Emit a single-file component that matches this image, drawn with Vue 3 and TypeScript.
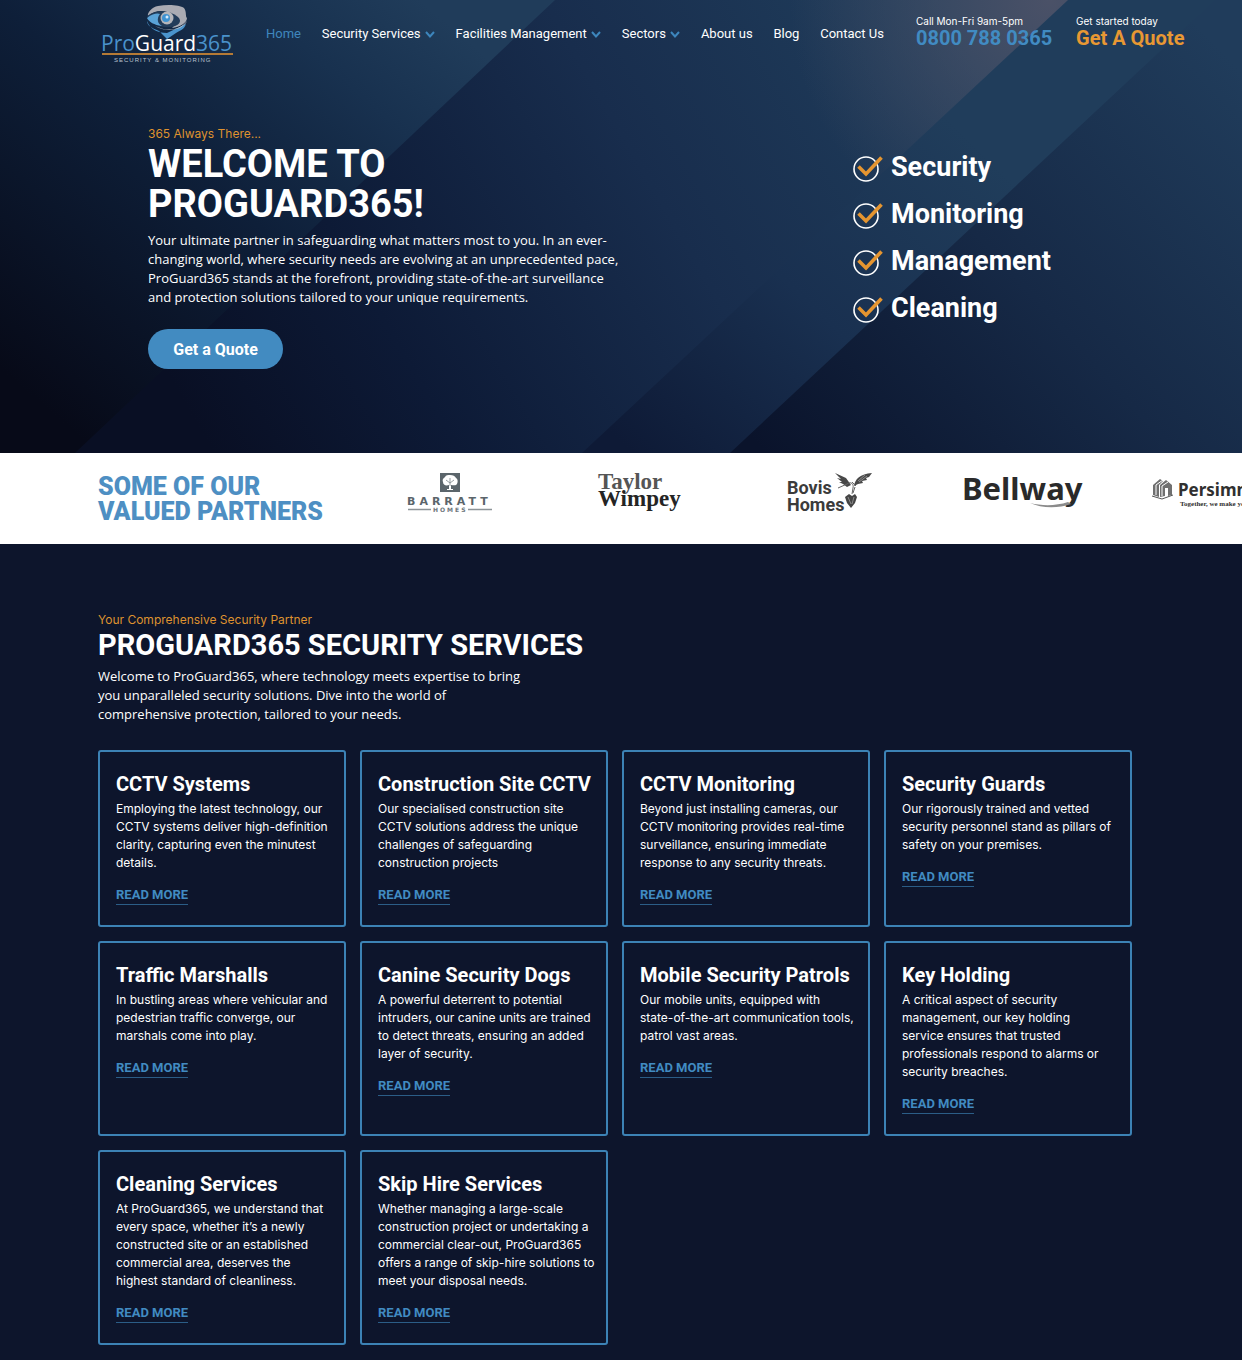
<script setup lang="ts">
interface NavItem { label: string; active?: boolean; menu?: boolean }
interface Service { title: string; text: string }

const nav: NavItem[] = [
  { label: 'Home', active: true },
  { label: 'Security Services', menu: true },
  { label: 'Facilities Management', menu: true },
  { label: 'Sectors', menu: true },
  { label: 'About us' },
  { label: 'Blog' },
  { label: 'Contact Us' },
]

const features: string[] = ['Security', 'Monitoring', 'Management', 'Cleaning']

const services: Service[] = [
  { title: 'CCTV Systems', text: 'Employing the latest technology, our\nCCTV systems deliver high-definition\nclarity, capturing even the minutest\ndetails.' },
  { title: 'Construction Site CCTV', text: 'Our specialised construction site\nCCTV solutions address the unique\nchallenges of safeguarding\nconstruction projects' },
  { title: 'CCTV Monitoring', text: 'Beyond just installing cameras, our\nCCTV monitoring provides real-time\nsurveillance, ensuring immediate\nresponse to any security threats.' },
  { title: 'Security Guards', text: 'Our rigorously trained and vetted\nsecurity personnel stand as pillars of\nsafety on your premises.' },
  { title: 'Traffic Marshalls', text: 'In bustling areas where vehicular and\npedestrian traffic converge, our\nmarshals come into play.' },
  { title: 'Canine Security Dogs', text: 'A powerful deterrent to potential\nintruders, our canine units are trained\nto detect threats, ensuring an added\nlayer of security.' },
  { title: 'Mobile Security Patrols', text: 'Our mobile units, equipped with\nstate-of-the-art communication tools,\npatrol vast areas.' },
  { title: 'Key Holding', text: 'A critical aspect of security\nmanagement, our key holding\nservice ensures that trusted\nprofessionals respond to alarms or\nsecurity breaches.' },
  { title: 'Cleaning Services', text: 'At ProGuard365, we understand that\nevery space, whether it’s a newly\nconstructed site or an established\ncommercial area, deserves the\nhighest standard of cleanliness.' },
  { title: 'Skip Hire Services', text: 'Whether managing a large-scale\nconstruction project or undertaking a\ncommercial clear-out, ProGuard365\noffers a range of skip-hire solutions to\nmeet your disposal needs.' },
]
</script>

<template>
  <div class="page">
    <div class="hero">
      <svg class="backdrop" viewBox="0 0 1242 453" preserveAspectRatio="none" aria-hidden="true">
        <defs>
          <linearGradient id="bandA" gradientUnits="userSpaceOnUse" x1="60" y1="420" x2="420" y2="0">
            <stop offset="0" stop-color="#070a18" /><stop offset=".5" stop-color="#0e1f39" />
            <stop offset=".8" stop-color="#18314f" /><stop offset="1" stop-color="#203c5a" />
          </linearGradient>
          <linearGradient id="bandB" gradientUnits="userSpaceOnUse" x1="200" y1="430" x2="940" y2="0">
            <stop offset="0" stop-color="#090f24" /><stop offset=".25" stop-color="#0d1a36" />
            <stop offset=".6" stop-color="#182d4d" /><stop offset="1" stop-color="#203e5c" />
          </linearGradient>
          <linearGradient id="bandC" gradientUnits="userSpaceOnUse" x1="640" y1="460" x2="960" y2="130">
            <stop offset="0" stop-color="#0e1a36" /><stop offset=".5" stop-color="#193050" />
            <stop offset="1" stop-color="#203d5b" />
          </linearGradient>
          <linearGradient id="bandD" gradientUnits="userSpaceOnUse" x1="780" y1="470" x2="1230" y2="60">
            <stop offset="0" stop-color="#0a132b" /><stop offset=".5" stop-color="#162946" />
            <stop offset="1" stop-color="#203c5b" />
          </linearGradient>
          <radialGradient id="glow" gradientUnits="userSpaceOnUse" cx="1050" cy="0" r="260">
            <stop offset="0" stop-color="#55566a" stop-opacity=".8" /><stop offset="1" stop-color="#55566a" stop-opacity="0" />
          </radialGradient>
        </defs>
        <rect width="1242" height="453" fill="url(#bandD)" />
        <path d="M0 0H1215L730 453H0Z" fill="url(#bandC)" />
        <path d="M0 0H1068L582 453H0Z" fill="url(#bandB)" />
        <path d="M0 0H1068L582 453H0Z" fill="url(#glow)" />
        <path d="M0 0H555L75 453H0Z" fill="url(#bandA)" />
      </svg>

      <header class="topbar">
        <a href="#" class="brand" aria-label="ProGuard365 home">
          <svg width="134" height="60" viewBox="0 0 134 60">
            <path d="M47 17C50 25 57 29 67 29L86 20C84 26 79 27 76 29L67 35L59 27C51 24 47 21 47 17Z" fill="#4a94cd" />
            <path d="M48 12C47 9 52 3 58 2C68 0 80 1 84 4C87 8 85 12 87 14C87 19 80 23 72 24C77 20 77 10 67 8C61 6 53 7 48 12Z" fill="#aaabb3" />
            <path d="M47 12C57 5 70 6 78 13C83 18 78 22 71 23C60 24 51 20 47 12Z" fill="#223c5a" />
            <path d="M47 14C53 9 58 9 60 10C56 15 58 20 62 22C54 21 49 18 47 14Z" fill="#5aa3d8" />
            <circle cx="67" cy="14" r="6.5" fill="#b5b6bb" />
            <circle cx="66" cy="14" r="4" fill="#3f93d2" /><circle cx="67" cy="13" r="1.5" fill="#d4ecff" />
            <path d="M55 22C69 29 81 25 87 17C84 25 68 30 55 22Z" fill="#c9cbd0" />
            <text x="1" y="47" class="brand-name"><tspan fill="#4a92cb">Pro</tspan><tspan fill="#fff">Guard</tspan><tspan fill="#4a92cb">365</tspan></text>
            <path d="M2 50H133" stroke="#b57a35" stroke-width="2" />
            <text x="14" y="58" class="brand-sub">SECURITY &amp; MONITORING</text>
          </svg>
        </a>
        <nav class="nav" aria-label="Main">
          <a v-for="item in nav" :key="item.label" href="#" :class="{ active: item.active }">
            {{ item.label }}
            <svg v-if="item.menu" width="10" height="7" viewBox="0 0 10 7"><path d="M1 1L5 5.5L9 1" fill="none" stroke="#3d86bd" stroke-width="2" /></svg>
          </a>
        </nav>
        <div class="contacts">
          <a href="#" class="contact phone"><small>Call Mon-Fri 9am-5pm</small><strong>0800 788 0365</strong></a>
          <a href="#" class="contact quote"><small>Get started today</small><strong>Get A Quote</strong></a>
        </div>
      </header>

      <section class="welcome">
        <div>
          <p class="eyebrow">365 Always There...</p>
          <h1>WELCOME TO<br>PROGUARD365!</h1>
          <p class="copy">Your ultimate partner in safeguarding what matters most to you. In an ever-<br>changing world, where security needs are evolving at an unprecedented pace,<br>ProGuard365 stands at the forefront, providing state-of-the-art surveillance<br>and protection solutions tailored to your unique requirements.</p>
          <button type="button" class="cta">Get a Quote</button>
        </div>
        <ul class="features">
          <li v-for="feature in features" :key="feature">
            <svg width="30" height="28" viewBox="0 0 30 28">
              <circle cx="13" cy="15" r="12" fill="none" stroke="#fff" stroke-width="1.6" />
              <path d="M5.5 12.5L13 20L28.5 3.5" fill="none" stroke="#e59530" stroke-width="3.6" />
            </svg>
            {{ feature }}
          </li>
        </ul>
      </section>
    </div>

    <section class="partners">
      <h2>SOME OF OUR<br>VALUED PARTNERS</h2>
      <div class="logos">
        <svg viewBox="0 0 124 60" role="img" aria-label="Barratt Homes">
          <rect x="52" y="7" width="20" height="19" fill="#5b656b" />
          <path d="M62 9C65 9 67 10 68 12C70 13 70 16 69 18C68 20 65 19 63 19V23H65V24H59V23H61V19C58 20 55 19 55 16C54 13 56 12 57 11C58 9 60 9 62 9Z" fill="#fff" />
          <path d="M62 20V12M62 17L58 14M62 17L66 14" stroke="#7c858a" stroke-width=".8" />
          <text x="19" y="39" class="barratt">BARRATT</text>
          <path d="M20 43.5H43M80 43.5H104" stroke="#8d9498" stroke-width="1.5" />
          <text x="45" y="46" class="barratt-sub">HOMES</text>
        </svg>
        <svg viewBox="0 0 124 60" role="img" aria-label="Taylor Wimpey">
          <text x="20" y="23" class="taylor" fill="#555">Taylor</text>
          <text x="20" y="40" class="taylor" fill="#242424">Wimpey</text>
        </svg>
        <svg viewBox="0 0 124 60" role="img" aria-label="Bovis Homes">
          <text x="19" y="28" class="bovis">Bovis</text>
          <text x="19" y="45" class="bovis">Homes</text>
          <path d="M67 7L78 12L83 19L79 21L75 18L71 16L74 16L69 12L73 13ZM86 20C87 13 92 8 104 7L101 11L98 12L99 14L94 15L95 17L90 18Z" fill="#484848" />
          <path d="M70 22L79 18C83 15 86 18 85 22L84 28M87 21L85 27M84 16L88 20" fill="none" stroke="#666" />
          <path d="M77 31L81 28L84 30L87 28L89 31L87 37L83 42L79 37Z" fill="#454545" />
          <path d="M80 31L83 38M86 31L84 38M91 16L99 10M90 15L97 9" stroke="#aaa" stroke-width=".7" />
        </svg>
        <svg viewBox="0 0 124 60" role="img" aria-label="Bellway">
          <text x="4" y="34" class="bellway">Bellway</text>
          <path d="M72 37C83 42 99 43 113 38L110 36C98 40 84 40 72 37Z" fill="#8b8b8b" />
        </svg>
        <svg viewBox="0 0 124 60" role="img" aria-label="Persimmon">
          <path d="M5 19L12 13L15 15L11 19V31L5 29ZM12 19L18 14L24 19V29L20 30V22L17 22V30L12 31Z" fill="#707070" />
          <path d="M8 29V19L15 14M14 30V20L20 16" fill="none" stroke="#fff" />
          <path d="M4 30L14 33L25 29" fill="none" stroke="#555" />
          <text x="30" y="30" class="persimmon">Persimmon</text>
          <text x="32" y="40" class="persimmon-sub">Together, we make your home</text>
        </svg>
      </div>
    </section>

    <main class="services">
      <p class="eyebrow">Your Comprehensive Security Partner</p>
      <h2>PROGUARD365 SECURITY SERVICES</h2>
      <p class="copy">Welcome to ProGuard365, where technology meets expertise to bring<br>you unparalleled security solutions. Dive into the world of<br>comprehensive protection, tailored to your needs.</p>
      <div class="cards">
        <article v-for="service in services" :key="service.title" class="card">
          <h3>{{ service.title }}</h3>
          <p>{{ service.text }}</p>
          <a href="#">READ MORE</a>
        </article>
      </div>
    </main>
  </div>
</template>

<style>
body { margin: 0; background: #0d152c; }
</style>

<style scoped>
.page { font-family: Inter, "Open Sans", sans-serif; color: #fff; overflow: hidden; }
h1, h2, h3, p, ul { margin: 0; padding: 0; }
h1, h2, h3, .nav, .contact strong, .cta, .features, .card a { font-family: Roboto, "Noto Sans", sans-serif; }
a { text-decoration: none; color: inherit; }

.hero { position: relative; padding-bottom: 84px; }
.backdrop { position: absolute; inset: 0; width: 100%; height: 100%; z-index: 0; }
.topbar, .welcome { position: relative; z-index: 1; }

.topbar { display: flex; align-items: center; height: 68px; padding: 0 57px 0 100px; }
.brand { height: 60px; margin-right: 32px; }
.brand-name { font: 400 21px "Open Sans", sans-serif; }
.brand-sub { font: 400 6px "Liberation Sans", sans-serif; letter-spacing: 1px; fill: #b9c2cf; }
.nav { flex: 1; display: flex; justify-content: space-between; font-size: 13px; line-height: 20px; white-space: nowrap; }
.nav .active { color: #3f87bd; }
.nav svg { margin-left: 1px; }
.contacts { display: flex; margin-left: 32px; padding-bottom: 4px; gap: 20px; }
.contact { display: flex; flex-direction: column; white-space: nowrap; }
.phone { width: 140px; }
.quote { width: 109px; }
.contact small { font-size: 10px; line-height: 12px; }
.contact strong { font-size: 20px; line-height: 22px; font-weight: 700; }
.phone strong { color: #418bc2; }
.quote strong { color: #e89833; }

.welcome { display: grid; grid-template-columns: 1fr 279px; padding: 56px 110px 0 148px; }
.eyebrow { color: #df922f; font-size: 12px; line-height: 19px; }
h1 { margin-top: 1px; font-size: 38px; line-height: 40px; font-weight: 700; }
.copy { font-family: "Open Sans", sans-serif; font-size: 13px; line-height: 19px; margin-top: 7px; }
.cta { display: block; margin-top: 22px; padding: 0 24px; height: 40px; min-width: 135px; border: 0; border-radius: 20px; background: #428bc1; color: #fff; font-size: 16px; font-weight: 700; }
.features { list-style: none; padding-top: 20px; }
.features li { display: flex; align-items: center; gap: 8px; font-size: 27px; line-height: 47px; font-weight: 700; }

.partners { display: flex; align-items: center; height: 91px; padding-left: 98px; background: #fff; overflow: hidden; }
.partners h2 { flex: 0 0 290px; color: #4e8fc3; font-size: 25px; line-height: 25px; font-weight: 900; }
.logos { display: flex; gap: 66px; padding-bottom: 6px; }
.logos svg { flex: none; width: 124px; height: 60px; overflow: visible; }
.barratt { font: 700 11px "DejaVu Sans", sans-serif; letter-spacing: 4px; fill: #5b656b; }
.barratt-sub { font: 700 6px "DejaVu Sans", sans-serif; letter-spacing: 2px; fill: #6e777c; }
.taylor { font: 700 23px "Liberation Serif", serif; }
.bovis { font: 700 18px Roboto, sans-serif; fill: #3b3b3b; }
.bellway { font: 700 31px "Noto Sans", sans-serif; fill: #2a2a2a; }
.persimmon { font: 700 17px "Noto Sans", sans-serif; fill: #303030; }
.persimmon-sub { font: 700 7px "Liberation Serif", serif; fill: #303030; }

.services { padding: 66px 110px 15px 98px; }
.services h2 { font-size: 29px; line-height: 32px; font-weight: 700; }
.services .copy { margin-top: 6px; }
.cards { display: grid; grid-template-columns: repeat(4, minmax(0, 1fr)); gap: 14px; margin-top: 26px; }
.card { border: 2px solid #3c82b5; border-radius: 3px; padding: 20px 16px; }
.card h3 { font-size: 20px; line-height: 24px; font-weight: 700; white-space: nowrap; }
.card p { margin-top: 4px; font-size: 12px; line-height: 18px; white-space: pre; }
.card a { display: inline-block; margin-top: 14px; border-bottom: 1px solid #2b5d87; color: #418bc2; font-size: 13px; line-height: 18px; font-weight: 700; vertical-align: top; }

@media (max-width: 1100px) {
  .topbar { height: auto; flex-wrap: wrap; padding: 4px 24px; }
  .welcome { padding: 56px 24px 0; }
  .services { padding: 66px 24px 15px; }
  .cards { grid-template-columns: repeat(auto-fill, minmax(248px, 1fr)); }
}
</style>
